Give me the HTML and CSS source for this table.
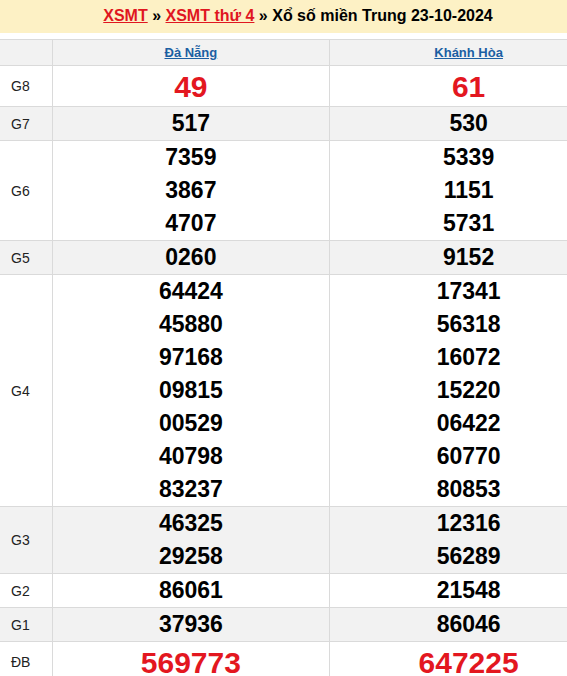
FILE: index.html
```html
<!DOCTYPE html>
<html lang="vi">
<head>
<meta charset="utf-8">
<title>XSMT 23-10-2024</title>
<link rel="stylesheet" href="styles.css">
</head>
<body>
<div class="page">
  <h2 class="title"><a href="#" class="crumb">XSMT</a> » <a href="#" class="crumb">XSMT thứ 4</a> » Xổ số miền Trung 23-10-2024</h2>
  <table class="results">
    <colgroup><col class="c-label"><col class="c-prov"><col class="c-prov"></colgroup>
    <thead>
      <tr class="head"><th></th><th><a href="#" class="prov">Đà Nẵng</a></th><th><a href="#" class="prov">Khánh Hòa</a></th></tr>
    </thead>
    <tbody>
      <tr class="g8"><td class="lbl">G8</td><td class="num red">49</td><td class="num red">61</td></tr>
      <tr class="alt"><td class="lbl">G7</td><td class="num">517</td><td class="num">530</td></tr>
      <tr><td class="lbl">G6</td><td class="num"><div>7359</div><div>3867</div><div>4707</div></td><td class="num"><div>5339</div><div>1151</div><div>5731</div></td></tr>
      <tr class="alt"><td class="lbl">G5</td><td class="num">0260</td><td class="num">9152</td></tr>
      <tr><td class="lbl">G4</td><td class="num"><div>64424</div><div>45880</div><div>97168</div><div>09815</div><div>00529</div><div>40798</div><div>83237</div></td><td class="num"><div>17341</div><div>56318</div><div>16072</div><div>15220</div><div>06422</div><div>60770</div><div>80853</div></td></tr>
      <tr class="alt"><td class="lbl">G3</td><td class="num"><div>46325</div><div>29258</div></td><td class="num"><div>12316</div><div>56289</div></td></tr>
      <tr><td class="lbl">G2</td><td class="num">86061</td><td class="num">21548</td></tr>
      <tr class="alt"><td class="lbl">G1</td><td class="num">37936</td><td class="num">86046</td></tr>
      <tr class="db"><td class="lbl">ĐB</td><td class="num red">569773</td><td class="num red">647225</td></tr>
    </tbody>
  </table>
</div>
</body>
</html>
```
FILE: styles.css
```css
html, body {
  margin: 0;
  padding: 0;
  background: #ffffff;
  overflow: hidden;
}
body {
  font-family: "Liberation Sans", Arial, sans-serif;
  color: #000;
}
.page {
  width: 608px;
}
.title {
  margin: 0 0 6px 0;
  height: 33px;
  line-height: 31px;
  background: #fdf1c5;
  font-size: 16px;
  font-weight: bold;
  text-align: center;
  padding-right: 12px;
}
.crumb {
  color: #e0161f;
  text-decoration: underline;
}
.results {
  width: 608px;
  border-collapse: collapse;
  table-layout: fixed;
}
.c-label { width: 52px; }
.results th, .results td {
  border: 1px solid #dadada;
  padding: 0;
}
.results tr > :first-child { border-left: none; }
.head th {
  background: #f2f2f2;
  height: 25px;
  font-size: 13px;
  font-weight: bold;
  text-align: center;
}
.prov {
  color: #1b5fa3;
  text-decoration: underline;
}
.lbl {
  font-size: 14px;
  color: #222;
  text-align: left;
  padding-left: 11px !important;
}
.alt td { background: #f2f2f2; }
.num {
  text-align: center;
  font-size: 23px;
  font-weight: bold;
  line-height: 33px;
}
.num div { height: 33px; }
.g8 td { height: 40px; }
.red {
  color: #e3171f;
  font-size: 30px;
}
.db td { height: 40px; }
```
